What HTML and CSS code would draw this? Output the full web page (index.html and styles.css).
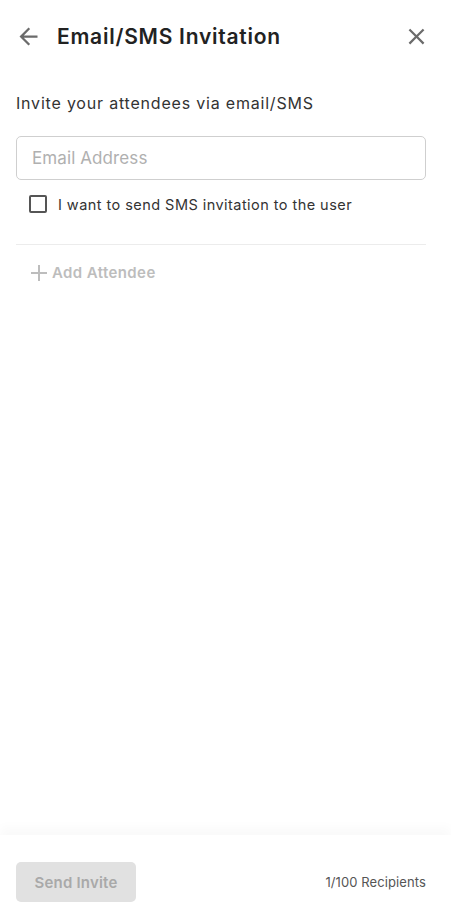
FILE: index.html
```html
<!DOCTYPE html>
<html lang="en">
<head>
    <meta charset="UTF-8">
    <meta name="viewport" content="width=device-width, initial-scale=1.0">
    <title>Email/SMS Invitation</title>
    <link rel="stylesheet" href="styles.css">
</head>
<body>

<div class="panel">
    <div class="header">
        <button class="icon-btn back-btn" aria-label="Back">
            <svg width="27" height="27" viewBox="0 0 24 24"><path d="M20 11H7.83l5.59-5.59L12 4l-8 8 8 8 1.41-1.41L7.83 13H20v-2z" fill="#6b6b6b"/></svg>
        </button>
        <h2 class="title">Email/SMS Invitation</h2>
        <button class="icon-btn close-btn" aria-label="Close">
            <svg width="27" height="27" viewBox="0 0 24 24"><path d="M19 6.41 17.59 5 12 10.59 6.41 5 5 6.41 10.59 12 5 17.59 6.41 19 12 13.41 17.59 19 19 17.59 13.41 12z" fill="#6b6b6b"/></svg>
        </button>
    </div>

    <div class="content">
        <p class="subtitle">Invite your attendees via email/SMS</p>

        <input type="text" class="email-input" placeholder="Email Address">

        <label class="sms-check">
            <span class="box"></span>
            I want to send SMS invitation to the user
        </label>

        <div class="divider"></div>

        <button class="add-btn">
            <svg width="18" height="18" viewBox="0 0 18 18"><path d="M9 1v16M1 9h16" stroke="#bdbdbd" stroke-width="2"/></svg>
            Add Attendee
        </button>
    </div>

    <div class="footer">
        <button class="send-btn" disabled>Send Invite</button>
        <span class="count">1/100 Recipients</span>
    </div>
</div>

</body>
</html>
```

FILE: styles.css
```css
body {
    margin: 0;
    font-family: Inter, "DejaVu Sans", sans-serif;
    background-color: #fff;
    color: #222;
}
.panel {
    display: flex;
    flex-direction: column;
    height: 915px;
}
.header {
    display: flex;
    align-items: center;
    padding: 22px 21px 0 15px;
    height: 28px;
}
.icon-btn {
    border: none;
    background: none;
    padding: 0;
    display: flex;
    cursor: pointer;
}
.title {
    flex: 1;
    margin: 0 0 0 15px;
    font-size: 21px;
    font-weight: 600;
    letter-spacing: 0.75px;
    color: #222;
}
.content {
    flex: 1;
    padding: 0 25px 0 16px;
}
.subtitle {
    margin: 0;
    padding-top: 43px;
    font-size: 16px;
    letter-spacing: 0.8px;
    color: #333;
}
.email-input {
    display: block;
    width: 100%;
    box-sizing: border-box;
    height: 44px;
    margin-top: 23px;
    padding: 0 15px;
    border: 1px solid #cfcfcf;
    border-radius: 5px;
    font-family: inherit;
    font-size: 17px;
    letter-spacing: 0.1px;
}
.email-input::placeholder {
    color: #b0b0b0;
}
.sms-check {
    display: flex;
    align-items: center;
    margin: 15px 0 0 13px;
    font-size: 14.5px;
    letter-spacing: 0.45px;
    color: #333;
}
.box {
    width: 14px;
    height: 14px;
    border: 2px solid #555;
    border-radius: 2px;
    margin-right: 11px;
}
.divider {
    height: 1px;
    background-color: #ececec;
    margin-top: 31px;
}
.add-btn {
    display: flex;
    align-items: center;
    gap: 4px;
    border: none;
    background: none;
    margin: 18px 0 0 14px;
    padding: 0;
    font-family: inherit;
    font-size: 15px;
    font-weight: 600;
    letter-spacing: 0.4px;
    color: #bdbdbd;
}
.footer {
    display: flex;
    align-items: center;
    justify-content: space-between;
    height: 66px;
    padding: 14px 25px 0 16px;
    box-shadow: 0 -8px 10px rgba(0, 0, 0, 0.025);
}
.send-btn {
    width: 120px;
    height: 40px;
    border: none;
    border-radius: 5px;
    background-color: #e1e1e1;
    font-family: inherit;
    font-size: 15px;
    font-weight: 600;
    letter-spacing: 0.2px;
    color: #a9a9a9;
}
.count {
    font-size: 13px;
    letter-spacing: 0.1px;
    color: #555;
}
```
